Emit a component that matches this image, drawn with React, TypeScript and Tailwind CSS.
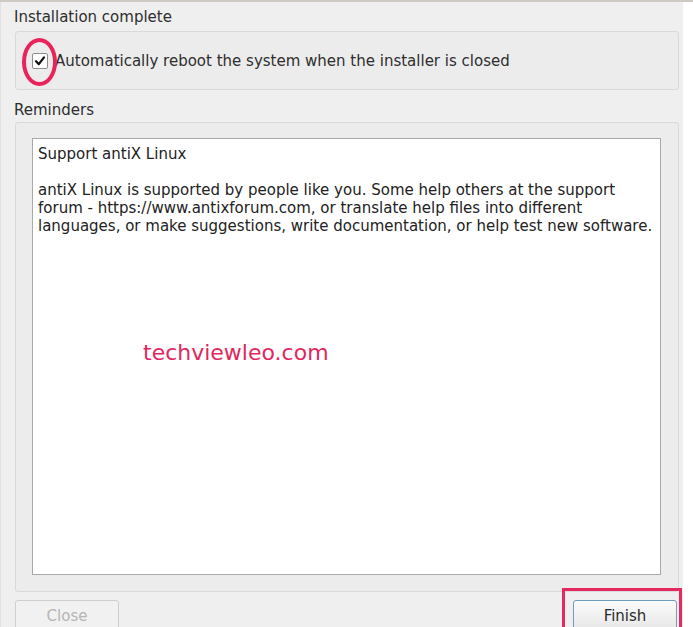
import React from "react"

const font = { fontFamily: '"DejaVu Sans", Verdana, sans-serif' }

function CheckBox() {
  return (
    <span className="flex h-[16px] w-[16px] shrink-0 items-center justify-center rounded-[2px] border border-[#8e8e8e] bg-white">
      <svg width="12" height="12" viewBox="0 0 12 12">
        <path d="M2 6.2 L4.8 9.2 L10 2.4" fill="none" stroke="#111" strokeWidth="2.2" strokeLinecap="round" strokeLinejoin="round" />
      </svg>
    </span>
  )
}

export default function App() {
  return (
    <div
      className="flex h-[627px] w-[693px] overflow-hidden border-t-2 border-[#cdc9c5] bg-white text-[15px] text-[#2e2e2e]"
      style={font}
    >
      <div className="relative flex w-[683px] shrink-0 flex-col border-l border-[#e2e2e2] bg-[#efefef] pl-[13px] pr-[4px]">
        <div className="mt-[6px] h-[18px] shrink-0 leading-[18px]">Installation complete</div>

        <div className="ml-px mt-[5px] flex h-[59px] shrink-0 items-center gap-[7px] rounded-[3px] border border-[#d9d9d9] bg-[#ececec] pl-[16px]">
          <CheckBox />
          <span className="leading-[18px]">Automatically reboot the system when the installer is closed</span>
        </div>

        <div className="mt-[11px] h-[18px] shrink-0 leading-[18px]">Reminders</div>

        <div className="ml-px mt-[3px] flex h-[470px] shrink-0 flex-col rounded-[3px] border border-[#d9d9d9] bg-[#ececec] pb-[16px] pl-[16px] pr-[17px] pt-[15px]">
          <div className="relative flex-1 border border-[#a9a9a9] bg-white px-[5px] pt-[6px] leading-[18px] text-[#222]">
            <p>Support antiX Linux</p>
            <p className="mt-[18px]">
              antiX Linux is supported by people like you. Some help others at the support
              <br />
              forum - https://www.antixforum.com, or translate help files into different
              <br />
              languages, or make suggestions, write documentation, or help test new software.
            </p>
            <p className="absolute left-[110px] top-[200px] text-[22px] leading-[28px] text-[#e0285f]">techviewleo.com</p>
          </div>
        </div>

        <div className="ml-px mt-[8px] flex shrink-0 items-start justify-between pr-[2px]">
          <button className="h-[32px] w-[104px] rounded-[3px] border border-[#cfcfcf] bg-[#f1f1f1] text-[15px] text-[#b5b5b5]">
            Close
          </button>
          <button className="h-[32px] w-[104px] rounded-[3px] border border-[#6d9cbd] bg-gradient-to-b from-[#fbfbfb] to-[#e6e6e6] text-[15px] text-[#2a2a2a]">
            Finish
          </button>
        </div>

        {/* annotation marks */}
        <div className="pointer-events-none absolute left-[21px] top-[36px] h-[48px] w-[35px] rounded-[50%] border-[4px] border-[#e8245a]" />
        <div className="pointer-events-none absolute left-[561px] top-[586px] h-[50px] w-[120px] border-[3px] border-[#e5295f]" />
      </div>
      <div className="flex-1 bg-white" />
    </div>
  )
}
